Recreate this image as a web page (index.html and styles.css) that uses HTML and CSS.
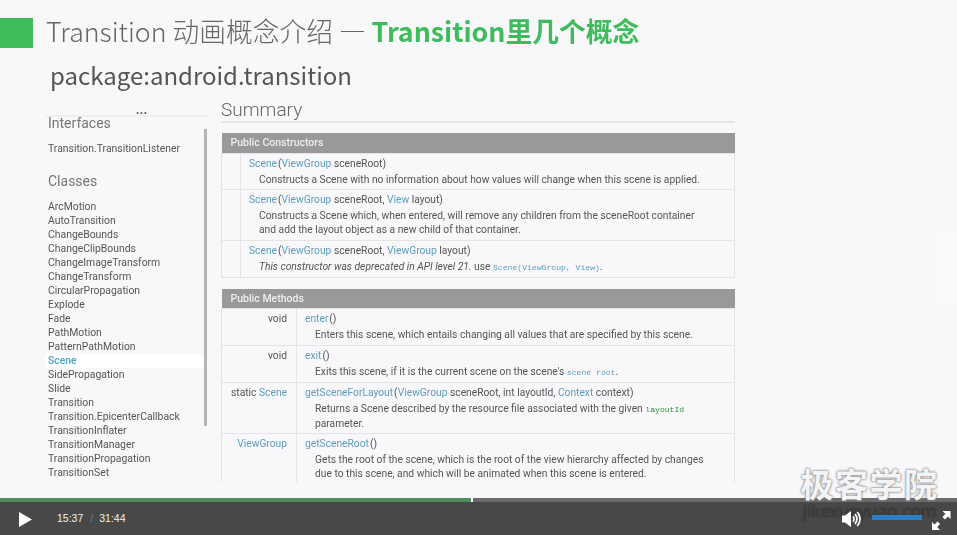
FILE: index.html
```html
<!DOCTYPE html>
<html lang="zh-CN">

<head>
    <meta charset="UTF-8">
    <meta name="viewport" content="width=device-width, initial-scale=1.0">
    <title>Transition 动画概念介绍</title>
    <link rel="stylesheet" href="styles.css">
</head>

<body>
    <div class="player">
        <div class="slide">
            <header class="slide-title">
                <span class="title-mark"></span>
                <h1>Transition 动画概念介绍 — <strong>Transition里几个概念</strong></h1>
            </header>
            <p class="package">package:android.transition</p>

            <div class="docs">
                <nav class="nav">
                    <div class="nav-more">...</div>
                    <div class="nav-body">
                        <h3 class="nav-interfaces">Interfaces</h3>
                        <ul class="nav-list">
                            <li>Transition.TransitionListener</li>
                        </ul>
                        <h3 class="nav-classes">Classes</h3>
                        <ul class="nav-list">
                            <li>ArcMotion</li>
                            <li>AutoTransition</li>
                            <li>ChangeBounds</li>
                            <li>ChangeClipBounds</li>
                            <li>ChangeImageTransform</li>
                            <li>ChangeTransform</li>
                            <li>CircularPropagation</li>
                            <li>Explode</li>
                            <li>Fade</li>
                            <li>PathMotion</li>
                            <li>PatternPathMotion</li>
                            <li class="current">Scene</li>
                            <li>SidePropagation</li>
                            <li>Slide</li>
                            <li>Transition</li>
                            <li>Transition.EpicenterCallback</li>
                            <li>TransitionInflater</li>
                            <li>TransitionManager</li>
                            <li>TransitionPropagation</li>
                            <li>TransitionSet</li>
                            <li>Visibility</li>
                        </ul>
                        <span class="nav-scroll"></span>
                    </div>
                </nav>

                <section class="summary">
                    <h2>Summary</h2>

                    <table class="api ctors">
                        <colgroup>
                            <col class="col-ret">
                            <col>
                        </colgroup>
                        <tr>
                            <th colspan="2">Public Constructors</th>
                        </tr>
                        <tr class="short-line">
                            <td class="ret"></td>
                            <td>
                                <div class="sig"><a>Scene</a>(<a>ViewGroup</a> sceneRoot)</div>
                                <div class="desc">Constructs a Scene with no information about how values will change when this scene is applied.</div>
                            </td>
                        </tr>
                        <tr class="two-line">
                            <td class="ret"></td>
                            <td>
                                <div class="sig"><a>Scene</a>(<a>ViewGroup</a> sceneRoot, <a>View</a> layout)</div>
                                <div class="desc">Constructs a Scene which, when entered, will remove any children from the sceneRoot container<br>and add the layout object as a new child of that container.</div>
                            </td>
                        </tr>
                        <tr class="one-line">
                            <td class="ret"></td>
                            <td>
                                <div class="sig"><a>Scene</a>(<a>ViewGroup</a> sceneRoot, <a>ViewGroup</a> layout)</div>
                                <div class="desc"><em>This constructor was deprecated in API level 21. </em>use <code>Scene(ViewGroup, View)</code>.</div>
                            </td>
                        </tr>
                    </table>

                    <table class="api methods">
                        <colgroup>
                            <col class="col-ret">
                            <col>
                        </colgroup>
                        <tr>
                            <th colspan="2">Public Methods</th>
                        </tr>
                        <tr class="one-line">
                            <td class="ret">void</td>
                            <td>
                                <div class="sig"><a>enter</a>()</div>
                                <div class="desc">Enters this scene, which entails changing all values that are specified by this scene.</div>
                            </td>
                        </tr>
                        <tr class="one-line">
                            <td class="ret">void</td>
                            <td>
                                <div class="sig"><a>exit</a>()</div>
                                <div class="desc">Exits this scene, if it is the current scene on the scene's <code>scene root</code>.</div>
                            </td>
                        </tr>
                        <tr class="two-line">
                            <td class="ret">static <a>Scene</a></td>
                            <td>
                                <div class="sig"><a>getSceneForLayout</a>(<a>ViewGroup</a> sceneRoot, int layoutId, <a>Context</a> context)</div>
                                <div class="desc">Returns a Scene described by the resource file associated with the given <code class="green">layoutId</code><br>parameter.</div>
                            </td>
                        </tr>
                        <tr class="two-line">
                            <td class="ret"><a>ViewGroup</a></td>
                            <td>
                                <div class="sig"><a>getSceneRoot</a>()</div>
                                <div class="desc">Gets the root of the scene, which is the root of the view hierarchy affected by changes<br>due to this scene, and which will be animated when this scene is entered.</div>
                            </td>
                        </tr>
                    </table>
                </section>
            </div>
        </div>

        <div class="progress">
            <span class="progress-done"></span>
            <span class="progress-head"></span>
            <span class="progress-rest"></span>
        </div>

        <div class="controls">
            <svg class="play" width="13" height="15" viewBox="0 0 13 15">
                <polygon points="0,0 13,7.5 0,15" fill="#fff" />
            </svg>
            <span class="time">15:37</span>
            <span class="time time-sep">/</span>
            <span class="time">31:44</span>
            <span class="spacer"></span>
            <svg class="volume" width="20" height="18" viewBox="0 0 20 18">
                <polygon points="0,5.5 3,5.5 9,1 9,17 3,12.5 0,12.5" fill="#fff" />
                <path d="M11 6.4a3.6 3.6 0 0 1 0 5.2M13 4.2a6.8 6.8 0 0 1 0 9.6M15.2 2a10 10 0 0 1 0 14" fill="none" stroke="#fff" stroke-width="1.7" />
            </svg>
            <span class="volume-bar"></span>
            <svg class="fullscreen" width="19" height="19" viewBox="0 0 19 19">
                <polygon points="10.5,0 18.5,0 18.5,8 16,5.6 13,8.6 10.4,6 13.4,3" fill="#fff" />
                <polygon points="0,19 0,11 2.5,13.4 5.5,10.4 8.1,13 5.1,16 8,19" fill="#fff" />
            </svg>
        </div>

        <div class="watermark">
            <div class="watermark-name">极客学院</div>
            <div class="watermark-url">jikexueyuan.com</div>
        </div>
        <span class="ghost-box"></span>
    </div>
</body>

</html>
```

FILE: styles.css
```css
* {
    box-sizing: border-box;
}

html,
body {
    margin: 0;
    height: 100%;
    overflow: hidden;
}

body {
    font-family: Roboto, "Noto Sans CJK SC", sans-serif;
}

.player {
    position: relative;
    display: flex;
    flex-direction: column;
    width: 957px;
    height: 535px;
    background-color: #484848;
    overflow: hidden;
}

/* slide */
.slide {
    flex: 0 0 498px;
    display: flex;
    flex-direction: column;
    background-color: #f8f7fa;
    overflow: hidden;
    filter: blur(0.3px);
}

.slide-title {
    display: flex;
    align-items: center;
    gap: 13px;
    height: 30px;
    margin-top: 18px;
}

.title-mark {
    width: 33px;
    height: 30px;
    background-color: #3dbd5a;
}

.slide-title h1 {
    margin: 0;
    padding-bottom: 4px;
    font-family: "Noto Sans CJK SC", sans-serif;
    font-size: 26.75px;
    font-weight: 300;
    line-height: 30px;
    color: #666;
    white-space: nowrap;
}

.slide-title strong {
    font-weight: 700;
    color: #3fbb5c;
}

.package {
    margin: 10px 0 0 50px;
    height: 34px;
    font-family: "Noto Sans CJK SC", sans-serif;
    font-size: 24px;
    line-height: 34px;
    color: #555;
}

.docs {
    display: flex;
    gap: 14px;
    height: 379px;
    margin-top: 11px;
    padding-left: 46px;
    overflow: hidden;
}

/* left list */
.nav {
    flex: 0 0 161px;
}

.nav-more {
    height: 14px;
    padding-left: 30px;
    font-size: 13px;
    font-weight: 700;
    line-height: 13px;
    text-align: center;
    color: #555;
    border-bottom: 2px solid #eeedf0;
}

.nav-body {
    position: relative;
    height: 365px;
    padding-left: 2px;
}

.nav-body h3 {
    margin: 0;
    font-size: 14px;
    font-weight: 400;
    line-height: 14px;
    color: #777;
}

.nav-interfaces {
    margin-top: -1px !important;
}

.nav-classes {
    margin-top: 18px !important;
    margin-bottom: 12px !important;
}

.nav-list {
    margin: 12px 0 0;
    padding: 0;
    list-style: none;
    font-size: 10.4px;
    line-height: 14px;
    color: #555;
}

.nav-classes+.nav-list {
    margin-top: 0;
}

.nav-list .current {
    margin: 0 4px 0 -3px;
    padding-left: 3px;
    font-weight: 500;
    color: #4ba3c7;
    background-color: #fff;
}

.nav-scroll {
    position: absolute;
    top: 13px;
    right: 0;
    width: 3px;
    height: 297px;
    background-color: #b5b5b5;
}

/* summary tables */
.summary {
    flex: 0 0 514px;
}

.summary h2 {
    margin: 0 0 10px;
    height: 20px;
    font-size: 19px;
    font-weight: 300;
    line-height: 14px;
    color: #666;
    border-bottom: 2px solid #e6e6e8;
}

.api {
    width: 514px;
    margin-bottom: 11px;
    border-collapse: collapse;
    table-layout: fixed;
    font-size: 10.25px;
    color: #555;
}

.api th {
    height: 20px;
    padding: 0 0 0 9px;
    font-size: 10.5px;
    font-weight: 500;
    text-align: left;
    color: #eee;
    background-color: #999;
}

.api td {
    padding: 3px 0 0 8px;
    vertical-align: top;
    border: 1px solid #e4e4e6;
}

.api a {
    color: #5f9dbd;
}

.short-line {
    height: 36px;
}

.one-line {
    height: 37px;
}

.two-line {
    height: 51px;
}

.ctors .col-ret {
    width: 19px;
}

.methods .col-ret {
    width: 75px;
}

.ctors .ret {
    padding: 0;
}

.methods .ret {
    padding-right: 9px;
    text-align: right;
}

.sig {
    line-height: 14px;
}

.sig a:first-child {
    margin-right: 1px;
}

.desc {
    padding: 2px 0 0 10px;
    line-height: 14px;
}

.desc em {
    font-style: italic;
}

.desc code {
    font-family: "Liberation Mono", monospace;
    font-size: 8.1px;
    color: #5f9dbd;
}

.desc code.green {
    color: #2f8f3f;
}

/* player bar */
.progress {
    flex: 0 0 4px;
    display: flex;
}

.progress-done {
    width: 471px;
    background-color: #4f8d5e;
}

.progress-head {
    width: 2px;
    background-color: #fff;
}

.progress-rest {
    flex: 1;
    background-color: #6a6a6a;
}

.controls {
    position: relative;
    z-index: 2;
    flex: 1;
    display: flex;
    align-items: center;
    padding-left: 19px;
    font-family: "Liberation Sans", sans-serif;
    font-size: 10.5px;
    color: #f0f0f0;
}

.play {
    margin: 2px 25px 0 0;
}

.time {
    padding-bottom: 2px;
}

.time-sep {
    margin: 0 6px 0 7px;
    color: #777;
}

.spacer {
    flex: 1;
}

.volume {
    margin-right: 10px;
}

.volume-bar {
    width: 50px;
    height: 5px;
    margin: 0 10px 2px 0;
    background-color: #2b7fc4;
}

.fullscreen {
    margin: 3px 6px 0 0;
}

/* overlays */
.watermark {
    position: absolute;
    z-index: 1;
    top: 465px;
    left: 798px;
    width: 143px;
    text-align: center;
}

.watermark-name {
    font-family: "Noto Sans CJK SC", sans-serif;
    font-size: 33px;
    font-weight: 700;
    line-height: 36px;
    letter-spacing: 1.5px;
    color: #f4f4f6;
    text-shadow: 0 0 2px #777, 0 0 3px #999;
}

.watermark-url {
    font-family: "Noto Sans", sans-serif;
    font-size: 17px;
    line-height: 19px;
    color: #3c3c3c;
    text-shadow: 0 0 2px #333;
}

.ghost-box {
    position: absolute;
    top: 228px;
    right: 0;
    width: 27px;
    height: 79px;
    background-color: #f9f8fa;
}
```
